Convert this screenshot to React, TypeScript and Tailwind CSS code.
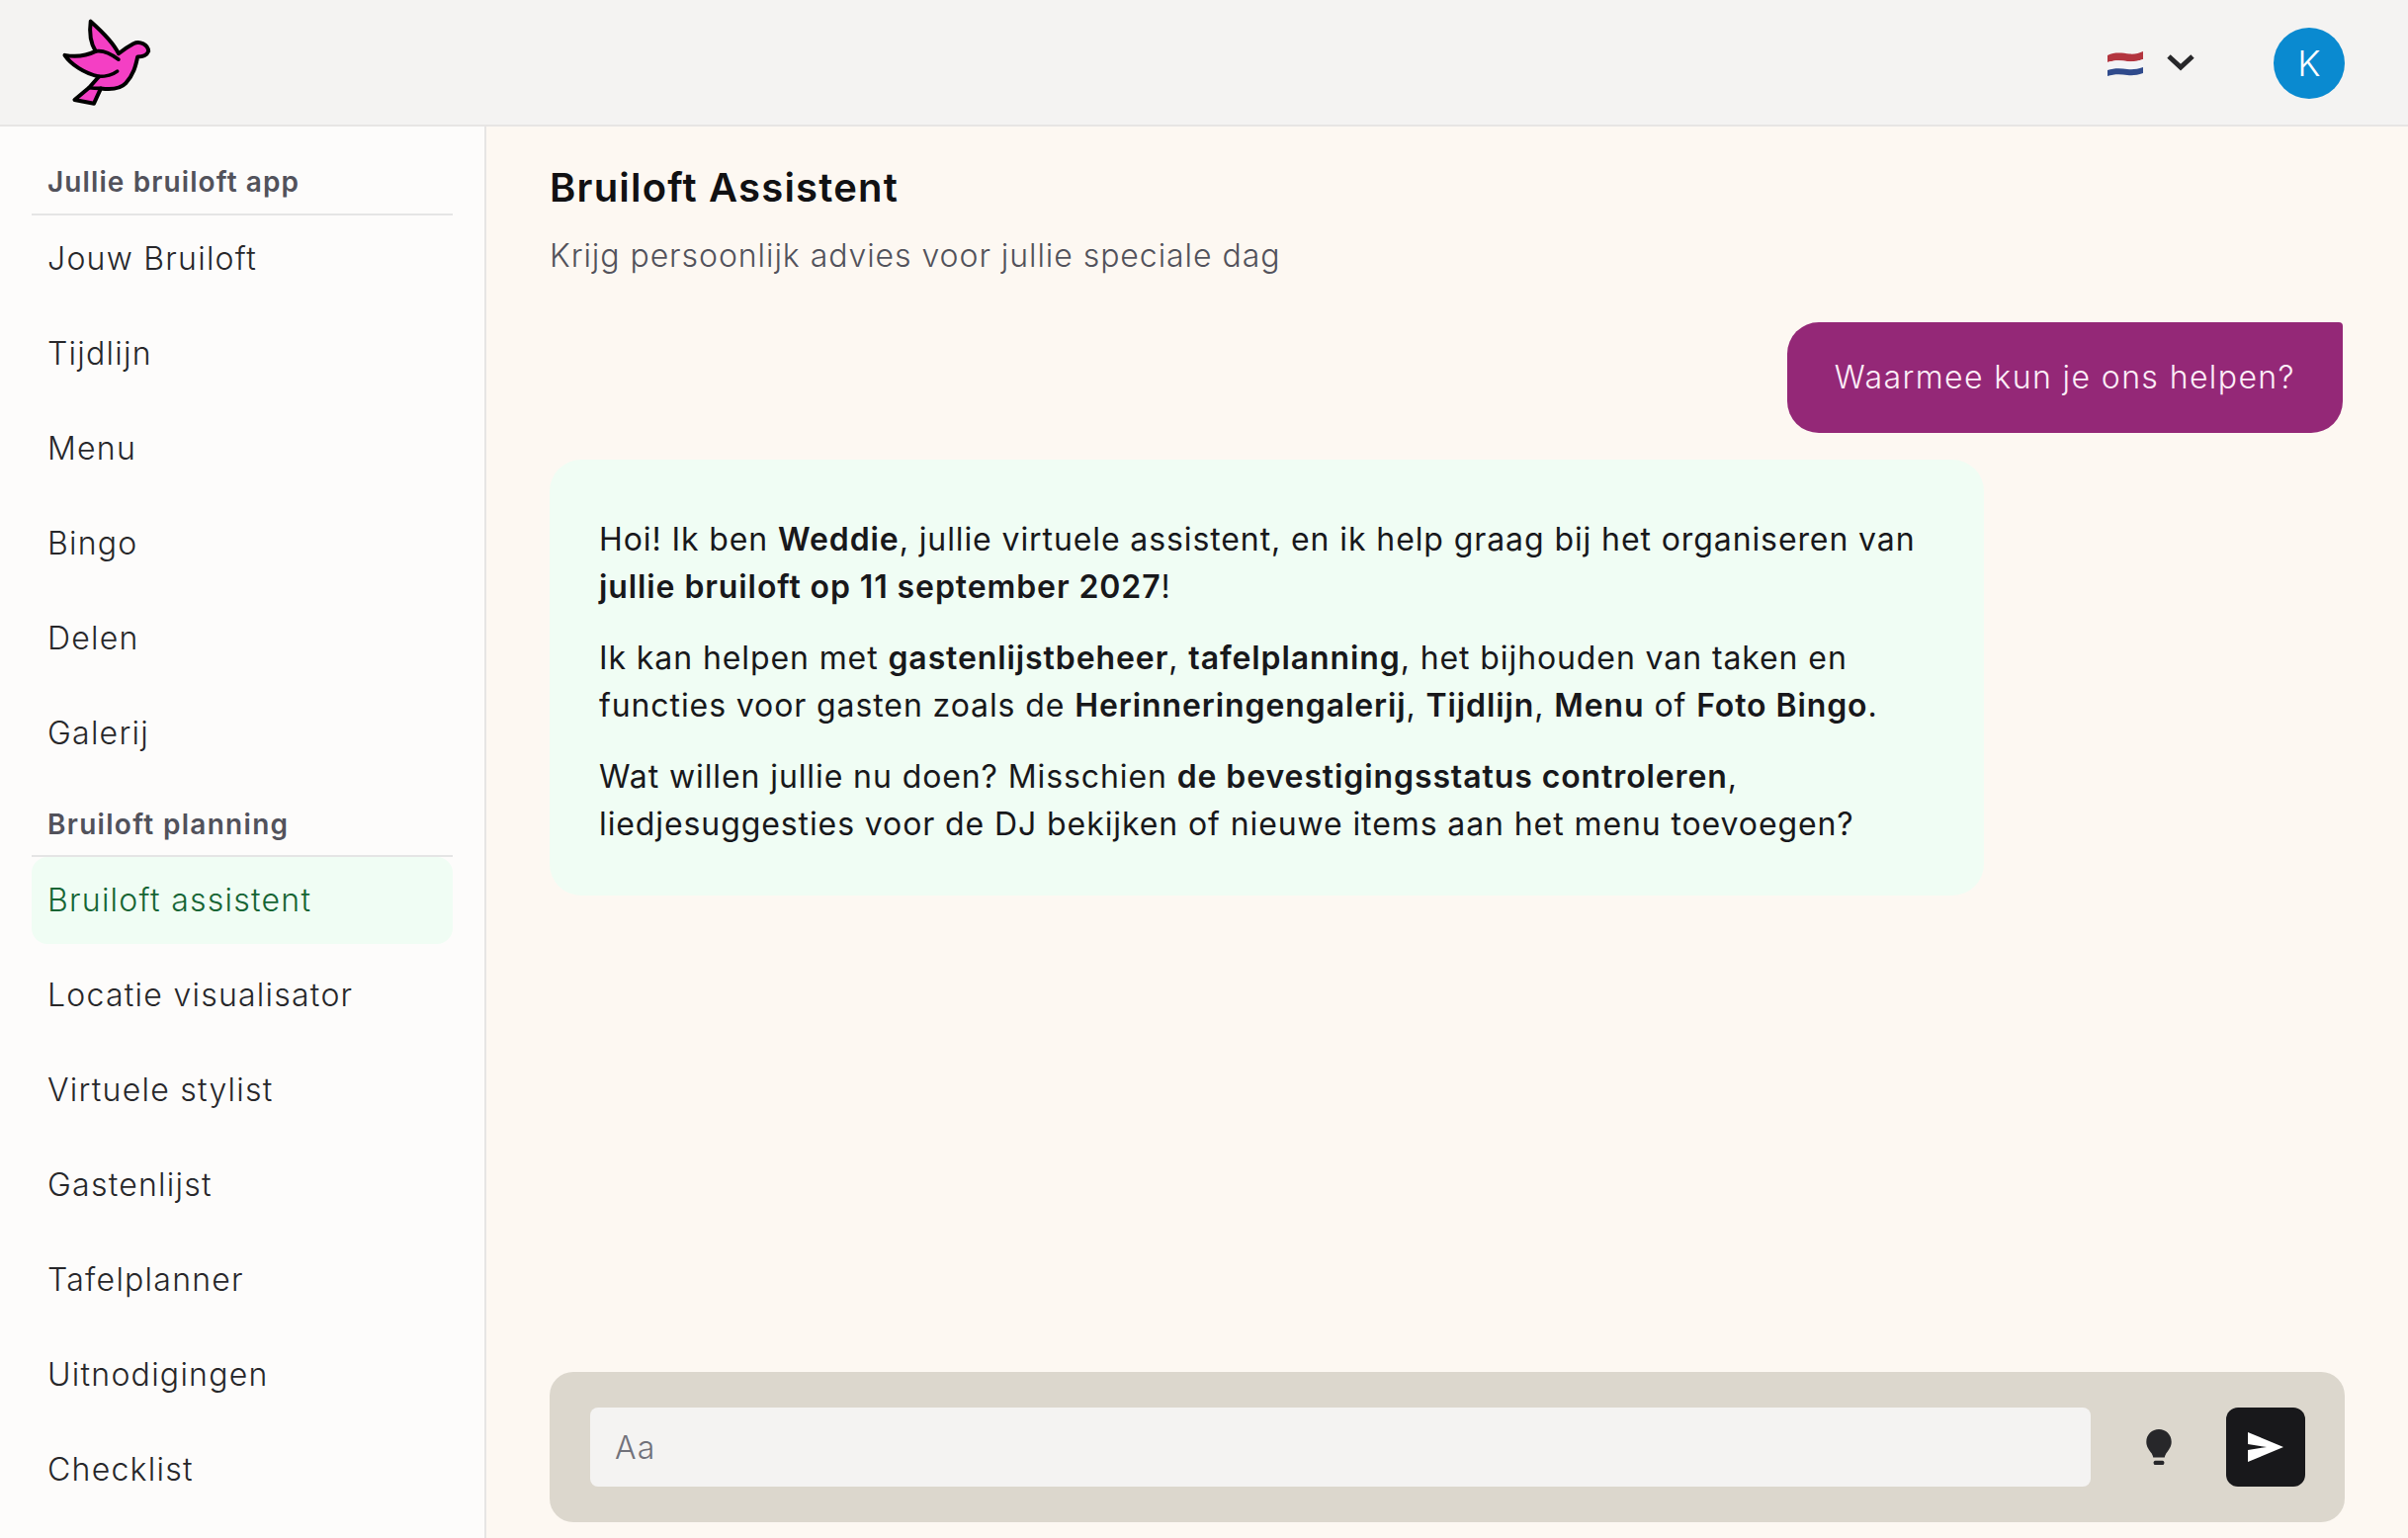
import React from "react";

const topItems = ["Jouw Bruiloft", "Tijdlijn", "Menu", "Bingo", "Delen", "Galerij"];
const planningItems = [
  "Bruiloft assistent",
  "Locatie visualisator",
  "Virtuele stylist",
  "Gastenlijst",
  "Tafelplanner",
  "Uitnodigingen",
  "Checklist",
];

const Dove = () => (
  <svg viewBox="60 50 285 280" className="w-[95px] h-[93px] -ml-[2px]">
    <path
      d="M155 64C150 100 155 130 170 155C140 170 105 172 76 167C95 195 135 222 180 232L150 266L106 303L165 314L186 268C215 272 245 270 262 252C285 228 292 200 298 172C310 172 325 170 331 155C330 135 305 122 285 132C270 140 255 150 240 162C225 130 190 95 155 64Z"
      fill="#f43fc4"
      stroke="#000"
      strokeWidth="12"
      strokeLinejoin="round"
    />
    <path d="M170 155C195 150 220 165 240 180M180 232C200 232 220 228 236 216M150 266C165 268 175 268 186 268" fill="none" stroke="#000" strokeWidth="11" strokeLinecap="round" />
  </svg>
);

const Flag = () => (
  <svg viewBox="0 0 36 26" className="w-[36px] h-[26px] mt-[2px]">
    <path d="M0 5C8 1 16 3 22 3.5C27 4 32 3 36 1V9C30 11 26 11.5 20 11C14 10 7 9.5 0 12Z" fill="#b3353f" />
    <path d="M0 12C7 9.5 14 10 20 11C26 11.5 30 11 36 9V17C30 19 26 19.5 20 19C14 18 7 17.5 0 20Z" fill="#f4f4f6" />
    <path d="M0 20C7 17.5 14 18 20 19C26 19.5 30 19 36 17V23C30 25 26 25.5 20 25C14 24 7 23.5 0 26Z" fill="#2f4a8c" />
  </svg>
);

const NavItem = ({ label, active }: { label: string; active?: boolean }) => (
  <div
    className={`h-[88px] mb-2 px-4 flex items-center rounded-2xl text-[32px] font-light tracking-[1.25px] ${
      active ? "bg-[#f0fdf4] text-[#166534]" : "text-[#27272a]"
    }`}
  >
    {label}
  </div>
);

const Bold = ({ children }: { children: React.ReactNode }) => (
  <b className="font-semibold tracking-[0.9px]">{children}</b>
);

const App = () => {
  return (
    <div className="h-screen overflow-hidden flex flex-col bg-[#fdf8f2] font-['Inter',sans-serif]">
      <header className="h-[128px] shrink-0 flex items-center justify-between bg-[#f4f3f2] border-b-2 border-[#e7e5e4] pl-[62px] pr-[64px]">
        <Dove />
        <div className="flex items-center">
          <Flag />
          <svg viewBox="0 0 28 18" className="w-[28px] h-[18px] ml-[24px] mr-[80px]" fill="none" stroke="#27272a" strokeWidth="5">
            <path d="M2 3L14 14L26 3" />
          </svg>
          <div className="w-[72px] h-[72px] mt-[1px] rounded-full bg-[#0a8ad0] text-white flex items-center justify-center text-[36px] font-light">K</div>
        </div>
      </header>

      <div className="flex-1 flex min-h-0">
        <aside className="w-[492px] shrink-0 bg-[#fdfcfb] border-r-2 border-[#e7e5e4] pl-8 pr-[32px] overflow-hidden">
          <div className="h-[90px] flex items-end pb-[11px] pl-4 border-b-2 border-[#e5e5e5] text-[28px] font-semibold tracking-[1.1px] text-[#52525b]">
            Jullie bruiloft app
          </div>
          {topItems.map((item) => (
            <NavItem key={item} label={item} />
          ))}
          <div className="h-[73px] flex items-end pb-[10px] pl-4 border-b-2 border-[#e5e5e5] text-[28px] font-semibold tracking-[1.3px] text-[#52525b]">
            Bruiloft planning
          </div>
          {planningItems.map((item) => (
            <NavItem key={item} label={item} active={item === "Bruiloft assistent"} />
          ))}
        </aside>

        <main className="flex-1 min-w-0 flex flex-col pl-[64px] pr-[64px] pb-4">
          <h1 className="mt-[36px] text-[40px] leading-[52px] font-semibold tracking-[1.2px] text-[#111113]">Bruiloft Assistent</h1>
          <p className="mt-[19px] text-[32px] leading-[48px] font-light tracking-[0.94px] text-[#52525b]">Krijg persoonlijk advies voor jullie speciale dag</p>

          <div className="mt-[43px] self-end h-[112px] px-[48px] flex items-center bg-[#942877] text-[#fdeef8] text-[32px] font-light tracking-[1.4px] rounded-[32px] rounded-tr-[4px] mr-[2px]">
            Waarmee kun je ons helpen?
          </div>

          <div className="mt-[27px] w-[1451px] bg-[#f0fdf4] rounded-[32px] pl-[50px] pr-[50px] pt-[57px] pb-[48px] text-[32px] leading-[48px] tracking-[0.9px] text-[#18181b]">
            <p>
              Hoi! Ik ben <Bold>Weddie</Bold>, jullie virtuele assistent, en ik help graag bij het organiseren van{" "}
              <Bold>jullie bruiloft op 11 september 2027</Bold>!
            </p>
            <p className="mt-6">
              Ik kan helpen met <Bold>gastenlijstbeheer</Bold>, <Bold>tafelplanning</Bold>, het bijhouden van taken en functies voor gasten zoals de{" "}
              <Bold>Herinneringengalerij</Bold>, <Bold>Tijdlijn</Bold>, <Bold>Menu</Bold> of <Bold>Foto Bingo</Bold>.
            </p>
            <p className="mt-6">
              Wat willen jullie nu doen? Misschien <Bold>de bevestigingsstatus controleren</Bold>, liedjesuggesties voor de DJ bekijken of nieuwe items aan het menu toevoegen?
            </p>
          </div>

          <div className="mt-auto h-[152px] shrink-0 flex items-center bg-[#dcd7cd] rounded-[24px] pl-[41px] pr-[40px]">
            <div className="flex-1 h-[80px] flex items-center bg-[#f4f3f2] rounded-lg pl-[25px] pt-[2px] text-[32px] font-light tracking-[1.2px] text-[#71717a]">Aa</div>
            <svg viewBox="0 0 24 34" className="w-[26px] h-[36px] ml-[56px] mr-[55px]" fill="#27272a">
              <path d="M12 0C5.5 0 0 5 0 12C0 17 3 20 5 23C6 25 6.5 26 6.5 27H17.5C17.5 26 18 25 19 23C21 20 24 17 24 12C24 5 18.5 0 12 0Z" />
              <rect x="7" y="30" width="10" height="4" rx="1.5" />
            </svg>
            <div className="w-[80px] h-[80px] rounded-xl bg-[#18181b] flex items-center justify-center">
              <svg viewBox="0 0 36 30" className="w-[36px] h-[30px]" fill="#fff">
                <path d="M0 0L36 15L0 30V18L19 15L0 12Z" />
              </svg>
            </div>
          </div>
        </main>
      </div>
    </div>
  );
};

export default App;
